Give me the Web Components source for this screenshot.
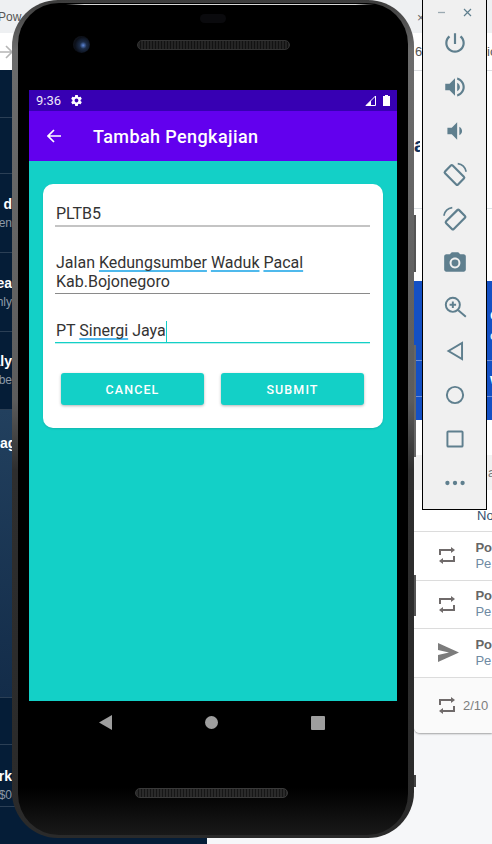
<!DOCTYPE html>
<html lang="id">
<head>
<meta charset="utf-8">
<title>Tambah Pengkajian</title>
<style>
    html, body { margin: 0; padding: 0; height: 100%; overflow: hidden; background: #f6f7f9; }
    body { font-family: Roboto, "Liberation Sans", sans-serif; }
</style>
</head>
<body>
<desk-top>
    <side-panel slot="left"></side-panel>
    <list-panel slot="right"></list-panel>
    <phone-frame slot="phone">
        <status-bar time="9:36"></status-bar>
        <app-bar title="Tambah Pengkajian"></app-bar>
        <form-card>
            <text-field first>PLTB5</text-field>
            <text-field>Jalan <u>Kedungsumber</u> <u>Waduk</u> <u>Pacal</u><br>Kab.Bojonegoro</text-field>
            <text-field focused>PT <u>Sinergi</u> Jaya</text-field>
            <div slot="actions">
                <md-button>Cancel</md-button>
                <md-button>Submit</md-button>
            </div>
        </form-card>
    </phone-frame>
    <emu-toolbar slot="toolbar"></emu-toolbar>
</desk-top>

<script>
class DeskTop extends HTMLElement {
    constructor() {
        super();
        this.attachShadow({ mode: "open" }).innerHTML = `
        <style>
            :host { display: block; position: relative; width: 492px; height: 844px; overflow: hidden; background: #f6f7f9; }
            .topbar { position: absolute; left: 0; top: 0; width: 492px; height: 70px; background: #fff; }
            .tabs { height: 33px; background: #eef0f2; }
            .pow { position: absolute; left: -2px; top: 10px; font: 12px "Liberation Sans", sans-serif; color: #555; }
            .arrow { position: absolute; left: 0; top: 44px; }
            .close { position: absolute; left: 417px; top: 10px; font: 13px "Liberation Sans", sans-serif; color: #666; }
            .six { position: absolute; left: 415px; top: 44px; font: 13px "Liberation Sans", sans-serif; color: #555; }
            .ic { position: absolute; left: 487px; top: 44px; font: 13px "Liberation Sans", sans-serif; color: #555; }
            .line { position: absolute; left: 414px; top: 70px; width: 78px; height: 1px; background: #dfe1e5; }
            ::slotted([slot=left]) { position: absolute; left: 0; top: 70px; }
            ::slotted([slot=right]) { position: absolute; left: 414px; top: 71px; }
            ::slotted([slot=phone]) { position: absolute; left: 12px; top: 0; }
            ::slotted([slot=toolbar]) { position: absolute; left: 422px; top: -1px; }
        </style>
        <div class="topbar">
            <div class="tabs"></div>
            <span class="pow">Pow</span>
            <svg class="arrow" width="14" height="16" viewBox="0 0 14 16" fill="none" stroke="#b5b5b5" stroke-width="1.6"><path d="M0 8h12M6 2l6 6-6 6"/></svg>
            <span class="close">×</span>
            <span class="six">6</span>
            <span class="ic">ic</span>
            <div class="line"></div>
        </div>
        <slot name="left"></slot>
        <slot name="right"></slot>
        <slot name="phone"></slot>
        <slot name="toolbar"></slot>
        `;
    }
}

class SidePanel extends HTMLElement {
    constructor() {
        super();
        const rows = [
            [48, "", ""],
            [56, "", ""],
            [79, "d", "en"],
            [79, "ea", "hly"],
            [78, "aly", "mbe"],
        ];
        this.attachShadow({ mode: "open" }).innerHTML = `
        <style>
            :host { display: block; width: 207px; height: 774px; background: #051d37; font-family: "Liberation Sans", sans-serif; }
            .row { box-sizing: border-box; width: 207px; border-bottom: 1px solid #2b3f55; padding: 0 195px 0 0; display: flex; flex-direction: column; justify-content: center; align-items: flex-end; gap: 4px; white-space: nowrap; overflow: hidden; }
            .row b { font-size: 14px; line-height: 15px; color: #fff; }
            .row i { font-style: normal; font-size: 12px; line-height: 14px; color: #8d99a6; }
            .group { height: 288px; background: linear-gradient(180deg, #22405e, #132c49); border-bottom: 1px solid #2b3f55; box-sizing: border-box; padding-top: 26px; }
            .group b { display: block; width: 12px; font-size: 14px; line-height: 15px; color: #fff; text-align: right; overflow: hidden; }
            .r2 { height: 47px; border-bottom: 1px solid #2b3f55; box-sizing: border-box; }
        </style>
        ${rows.map(r => `<div class="row" style="height:${r[0]}px"><b>${r[1]}</b><i>${r[2]}</i></div>`).join("")}
        <div class="group"><b>ag</b></div>
        <div class="r2"></div>
        <div class="row" style="height:62px;padding-top:20px"><b>rk</b><i>$0</i></div>
        `;
    }
}

class ListPanel extends HTMLElement {
    constructor() {
        super();
        const swap = `<svg width="18" height="19" viewBox="0 0 18 19" fill="none" stroke="#6f6a6a" stroke-width="2"><path d="M2 9V4h13"/><path d="M13 1v6l4-3z" fill="#6f6a6a" stroke="none"/><path d="M16 10v5H3"/><path d="M5 12v6l-4-3z" fill="#6f6a6a" stroke="none"/></svg>`;
        const send = `<svg width="22" height="19" viewBox="0 0 22 19"><path d="M0 0l21 9.500L0 19v-7l11-2.500L0 7z" fill="#7c7c7c"/></svg>`;
        const row = (icon) => `<div class="item"><span class="ico">${icon}</span><span class="txt"><b>Po</b><i>Pe</i></span></div>`;
        this.attachShadow({ mode: "open" }).innerHTML = `
        <style>
            :host { display: block; width: 78px; height: 662px; background: #fff; font-family: "Liberation Sans", sans-serif; box-shadow: 0 1px 2px rgba(0,0,0,.35); border-radius: 0 0 0 6px; overflow: hidden; }
            .head { color: #12305a; font: bold 20px "Liberation Sans", sans-serif; padding-top: 62px; height: 75px; border-bottom: 1px solid #dde1e5; line-height: 24px; }
            .head span { display: block; width: 6px; overflow: hidden; }
            .gap1 { height: 72px; }
            .blue { height: 139px; background: #1450c4; color: #fff; font: bold 15px "Liberation Sans", sans-serif; display: flex; flex-direction: column; }
            .blue div { padding-left: 76px; white-space: nowrap; }
            .blue .a { height: 80px; padding-top: 24px; box-sizing: border-box; border-bottom: 1px solid #6d8fd8; font-size: 16px; line-height: 20px; }
            .blue .a small { display: block; font: 13px "Liberation Sans", sans-serif; margin-top: 3px; }
            .blue .b { height: 35px; border-bottom: 1px solid #6d8fd8; line-height: 36px; }
            .gap2 { height: 35px; }
            .gray { height: 35px; background: #f1f1f1; color: #777; font: 13px/35px "Liberation Sans", sans-serif; padding-left: 74px; }
            .no { height: 41px; padding-left: 63px; font: 13px/52px "Liberation Sans", sans-serif; color: #33506e; white-space: nowrap; border-bottom: 1px solid #dcdcdc; }
            .item { height: 48.500px; box-sizing: border-box; border-bottom: 1px solid #dcdcdc; display: flex; align-items: center; }
            .ico { width: 63px; padding-left: 24px; box-sizing: border-box; display: flex; align-items: center; }
            .txt { display: flex; flex-direction: column; font-size: 13px; line-height: 16px; }
            .txt b { color: #666; }
            .txt i { font-style: normal; color: #6f8aa3; }
            .foot { height: 55px; background: #fafafa; display: flex; align-items: center; padding-left: 24px; gap: 7px; font-size: 13px; color: #7d7d7d; }
        </style>
        <div class="head"><span>a</span></div>
        <div class="gap1"></div>
        <div class="blue">
            <div class="a">e<small>c</small></div>
            <div class="b">w</div>
        </div>
        <div class="gap2"></div>
        <div class="gray">a</div>
        <div class="no">No</div>
        ${row(swap)}${row(swap)}${row(send)}
        <div class="foot">${swap}<span>2/10</span></div>
        `;
    }
}

class PhoneFrame extends HTMLElement {
    constructor() {
        super();
        this.attachShadow({ mode: "open" }).innerHTML = `
        <style>
            :host { display: block; box-sizing: border-box; width: 402px; height: 838px; border-radius: 46px; padding: 3px 6px 3px;
                background: linear-gradient(180deg, #3c3c3c 0, #6c6c6c 50px, #5c5c5c 400px, #2e2e2e 470px, #2a2a2a 100%); position: relative; }
            .bezel { box-sizing: border-box; height: 100%; border-radius: 41px; padding: 0 11px; display: flex; flex-direction: column; position: relative;
                background: linear-gradient(180deg, #000 0, #000 785px, #191919 100%); }
            .shine { position: absolute; left: 48px; right: 34px; top: 1px; height: 1px; background: linear-gradient(90deg, transparent, #d8d8d8 6%, #d8d8d8 94%, transparent); }
            .top { height: 87px; flex: none; position: relative; }
            .cam { position: absolute; left: 44px; top: 33px; width: 17px; height: 17px; border-radius: 50%; background: radial-gradient(circle at 60% 55%, #5c86d8 0, #1c2c48 25%, #0b0f18 60%, #1a1a1e 100%); }
            .spk { position: absolute; left: 108px; top: 37px; width: 151px; height: 8px; border-radius: 5px; background: repeating-linear-gradient(90deg, #242424 0 2px, #121212 2px 3px); border: 1px solid #333; }
            .sensor { position: absolute; left: 171px; top: 11px; width: 26px; height: 9px; border-radius: 5px; background: #0a0a0d; }
            .screen { flex: none; height: 611px; display: flex; flex-direction: column; background: #13d0c7; }
            .nav { flex: 1; position: relative; display: flex; flex-direction: column; align-items: center; }
            .keys { width: 100%; height: 43px; display: flex; align-items: center; justify-content: space-between; padding: 0 72px 0 70px; box-sizing: border-box; }
            .grille { margin-top: 44px; width: 151px; height: 8px; border-radius: 5px; background: repeating-linear-gradient(90deg, #2a2a2a 0 2px, #161616 2px 3px); border: 1px solid #3a3a3a; margin-left: -3px; }
            .btn { position: absolute; right: -2px; width: 2px; background: #666; }
        </style>
        <div class="btn" style="top:215px;height:57px;background:#555"></div>
        <div class="btn" style="top:345px;height:112px"></div>
        <div class="btn" style="top:575px;height:41px;background:#555"></div>
        <div class="btn" style="top:775px;height:12px;background:#444"></div>
        <div class="bezel">
            <div class="shine"></div>
            <div class="top">
                <div class="sensor"></div>
                <div class="cam"></div>
                <div class="spk"></div>
            </div>
            <div class="screen"><slot></slot></div>
            <div class="nav">
                <div class="keys">
                    <svg width="13" height="15" viewBox="0 0 13 15"><path d="M13 0v15L0 7.500z" fill="#9e9e9e"/></svg>
                    <svg width="13" height="13" viewBox="0 0 13 13"><circle cx="6.500" cy="6.500" r="6.500" fill="#9e9e9e"/></svg>
                    <svg width="14" height="14" viewBox="0 0 14 14"><rect width="14" height="14" rx="1" fill="#9e9e9e"/></svg>
                </div>
                <div class="grille"></div>
            </div>
        </div>
        `;
    }
}

class StatusBar extends HTMLElement {
    constructor() {
        super();
        this.attachShadow({ mode: "open" }).innerHTML = `
        <style>
            :host { display: flex; flex: none; align-items: center; height: 21px; background: #3700b3; color: #eee8f8; padding: 0 7px; font: 13px Roboto, sans-serif; }
            .gear { margin-left: 9px; }
            .right { margin-left: auto; display: flex; align-items: center; gap: 7px; }
        </style>
        <span>${this.getAttribute("time")}</span>
        <svg class="gear" width="13" height="13" viewBox="0 0 24 24" fill="#fff"><path d="M19.430 12.980c.040-.320.070-.640.070-.980s-.030-.660-.070-.980l2.110-1.650c.190-.150.240-.420.120-.640l-2-3.460c-.120-.220-.390-.300-.610-.220l-2.490 1c-.520-.400-1.080-.730-1.690-.980l-.380-2.650C14.460 2.180 14.250 2 14 2h-4c-.250 0-.460.180-.490.420l-.380 2.650c-.610.250-1.170.590-1.690.980l-2.490-1c-.230-.090-.490 0-.610.220l-2 3.460c-.130.220-.070.490.120.640l2.110 1.650c-.040.320-.070.650-.070.980s.030.660.070.980l-2.110 1.650c-.190.150-.240.420-.120.640l2 3.460c.120.220.390.300.610.220l2.490-1c.520.400 1.080.730 1.690.980l.380 2.650c.030.240.240.420.490.420h4c.250 0 .460-.180.490-.420l.380-2.650c.610-.250 1.170-.590 1.690-.980l2.490 1c.230.090.490 0 .610-.220l2-3.460c.120-.220.070-.490-.120-.640l-2.110-1.650zM12 15.500c-1.930 0-3.500-1.570-3.500-3.500s1.570-3.500 3.500-3.500 3.500 1.570 3.500 3.500-1.570 3.500-3.500 3.500z"/></svg>
        <span class="right">
            <svg width="11" height="11" viewBox="0 0 11 11"><path d="M10.500 1v9.500H1z" fill="none" stroke="#fff" stroke-width="1"/><path d="M6 5.500V11H0.500z" fill="#fff"/></svg>
            <svg width="7" height="11" viewBox="0 0 7 11"><path d="M2 0h3v1h2v10H0V1h2z" fill="#fff"/></svg>
        </span>
        `;
    }
}

class AppBar extends HTMLElement {
    constructor() {
        super();
        this.attachShadow({ mode: "open" }).innerHTML = `
        <style>
            :host { display: flex; flex: none; align-items: center; height: 50px; background: #6200ee; color: #fff; padding-left: 18px; gap: 32px; }
            h1 { margin: 0; font: 500 18px Roboto, sans-serif; letter-spacing: .4px; }
        </style>
        <svg width="14" height="14" viewBox="0 0 14 14" fill="none" stroke="#fff" stroke-width="1.700"><path d="M14 7H1M7 1L1 7l6 6"/></svg>
        <h1>${this.getAttribute("title")}</h1>
        `;
    }
}

class FormCard extends HTMLElement {
    constructor() {
        super();
        this.attachShadow({ mode: "open" }).innerHTML = `
        <style>
            :host { display: flex; flex-direction: column; box-sizing: border-box; width: 340px; height: 244px; margin: 23px 0 0 14px; padding: 19px 13px 0 12px; background: #fff; border-radius: 10px; box-shadow: 0 1px 2px rgba(0,0,0,.12); }
            .fields { display: flex; flex-direction: column; gap: 26px; }
            .actions { display: flex; margin: 30px 6px 0 6px; }
            ::slotted([slot=actions]) { display: flex; justify-content: space-between; width: 100%; }
        </style>
        <div class="fields"><slot></slot></div>
        <div class="actions"><slot name="actions"></slot></div>
        `;
    }
}

class TextField extends HTMLElement {
    constructor() {
        super();
        const focused = this.hasAttribute("focused");
        this.attachShadow({ mode: "open" }).innerHTML = `
        <style>
            :host { display: block; box-sizing: border-box; width: 315px; padding: 0 0 2px 1px; border-bottom: 1px solid #8a8a8a; font: 16px/19px Roboto, sans-serif; color: #333; }
            :host([first]) { padding: 1px 0 2px 1px; border-bottom: 2px solid #c4c4c4; }
            :host([focused]) { margin-top: 1px; border-bottom: 1px solid #13d0c7; box-shadow: 0 1px 0 #b8f0ec; }
            ::slotted(u) { text-decoration: underline #4fb9ec 2px; text-underline-offset: 2px; text-decoration-skip-ink: none; }
            .mark { position: relative; }
            .caret { position: absolute; left: 0; bottom: -2px; width: 1px; height: 21px; background: #13d0c7; }
        </style>
        <slot></slot>${focused ? `<span class="mark"><span class="caret"></span></span>` : ""}
        `;
    }
}

class MdButton extends HTMLElement {
    constructor() {
        super();
        this.attachShadow({ mode: "open" }).innerHTML = `
        <style>
            :host { display: flex; align-items: center; justify-content: center; width: 143px; height: 32px; background: #13d0c7; color: #fff; border-radius: 3px; font: 500 12.500px Roboto, sans-serif; letter-spacing: 1.100px; text-transform: uppercase; box-shadow: 0 1px 3px rgba(0,0,0,.3); }
        </style>
        <slot></slot>
        `;
    }
}

class EmuToolbar extends HTMLElement {
    constructor() {
        super();
        const c = "#5f7f8e";
        const icons = [
            `<svg viewBox="0 0 24 24" fill="${c}"><path d="M13 3h-2v10h2V3zm4.830 2.170l-1.420 1.420C17.990 7.860 19 9.810 19 12c0 3.870-3.130 7-7 7s-7-3.130-7-7c0-2.190 1.010-4.140 2.580-5.420L6.170 5.170C4.230 6.820 3 9.260 3 12c0 4.970 4.030 9 9 9s9-4.030 9-9c0-2.740-1.230-5.180-3.170-6.830z"/></svg>`,
            `<svg viewBox="0 0 24 24" fill="${c}"><path d="M3 9v6h4l5 5V4L7 9H3zm13.500 3c0-1.770-1.020-3.290-2.500-4.030v8.050c1.480-.730 2.500-2.250 2.500-4.020zM14 3.230v2.060c2.890.860 5 3.540 5 6.710s-2.110 5.850-5 6.710v2.060c4.010-.910 7-4.490 7-8.770s-2.990-7.860-7-8.770z"/></svg>`,
            `<svg viewBox="0 0 24 24" fill="${c}"><path d="M18.500 12c0-1.770-1.020-3.290-2.500-4.030v8.050c1.480-.730 2.500-2.250 2.500-4.020zM5 9v6h4l5 5V4L9 9H5z"/></svg>`,
            `<svg viewBox="0 0 24 24" fill="none" stroke="${c}" stroke-width="2"><rect x="6.500" y="3.500" width="10" height="17" rx="1.200" transform="rotate(-45 11.500 12)"/><path d="M14.500 1.500c4 .500 7 3.500 7.800 7.500" stroke-width="1.500"/></svg>`,
            `<svg viewBox="0 0 24 24" fill="none" stroke="${c}" stroke-width="2"><rect x="7.500" y="4" width="10" height="17" rx="1.200" transform="rotate(45 12.500 12.500)"/><path d="M9.500 1.500c-4 .500-7 3.500-7.800 7.500" stroke-width="1.500"/></svg>`,
            `<svg viewBox="0 0 24 24" fill="${c}"><path fill-rule="evenodd" d="M9 2L7.170 4H4c-1.100 0-2 .900-2 2v12c0 1.100.900 2 2 2h16c1.100 0 2-.900 2-2V6c0-1.100-.900-2-2-2h-3.170L15 2H9zm3 15c-2.760 0-5-2.240-5-5s2.240-5 5-5 5 2.240 5 5-2.240 5-5 5z"/><circle cx="12" cy="12" r="3.200"/></svg>`,
            `<svg viewBox="0 0 24 24" fill="none" stroke="${c}" stroke-width="1.800"><circle cx="10" cy="10" r="6.500"/><path d="M15 15l7 6M10 7v6M7 10h6"/></svg>`,
            `<svg viewBox="0 0 24 24" fill="none" stroke="${c}" stroke-width="1.800"><path d="M18.500 4.500v15L6 12z"/></svg>`,
            `<svg viewBox="0 0 24 24" fill="none" stroke="${c}" stroke-width="1.800"><circle cx="12" cy="12" r="7.500"/></svg>`,
            `<svg viewBox="0 0 24 24" fill="none" stroke="${c}" stroke-width="1.800"><rect x="5" y="5" width="14" height="14" rx=".8"/></svg>`,
            `<svg viewBox="0 0 24 24" fill="${c}"><circle cx="5" cy="12" r="2"/><circle cx="12" cy="12" r="2"/><circle cx="19" cy="12" r="2"/></svg>`,
        ];
        this.attachShadow({ mode: "open" }).innerHTML = `
        <style>
            :host { display: block; box-sizing: border-box; width: 65px; height: 511px; background: #f0f0f0; border: 1px solid #000; }
            .win { height: 22px; display: flex; align-items: center; justify-content: center; gap: 17px; padding-top: 1px; }
            .stack { display: flex; flex-direction: column; align-items: center; gap: 18px; padding-top: 7px; }
            .stack div { width: 26px; height: 26px; }
            svg { display: block; width: 100%; height: 100%; }
        </style>
        <div class="win">
            <svg style="width:9px;height:9px" viewBox="0 0 9 9"><path d="M1 4.500h7" stroke="#9aa9b1" stroke-width="1.300"/></svg>
            <svg style="width:9px;height:9px" viewBox="0 0 9 9"><path d="M1 1l7 7M8 1L1 8" stroke="${c}" stroke-width="1.200"/></svg>
        </div>
        <div class="stack">${icons.map(i => `<div>${i}</div>`).join("")}</div>
        `;
    }
}

customElements.define("desk-top", DeskTop);
customElements.define("side-panel", SidePanel);
customElements.define("list-panel", ListPanel);
customElements.define("phone-frame", PhoneFrame);
customElements.define("status-bar", StatusBar);
customElements.define("app-bar", AppBar);
customElements.define("form-card", FormCard);
customElements.define("text-field", TextField);
customElements.define("md-button", MdButton);
customElements.define("emu-toolbar", EmuToolbar);
</script>
</body>
</html>
